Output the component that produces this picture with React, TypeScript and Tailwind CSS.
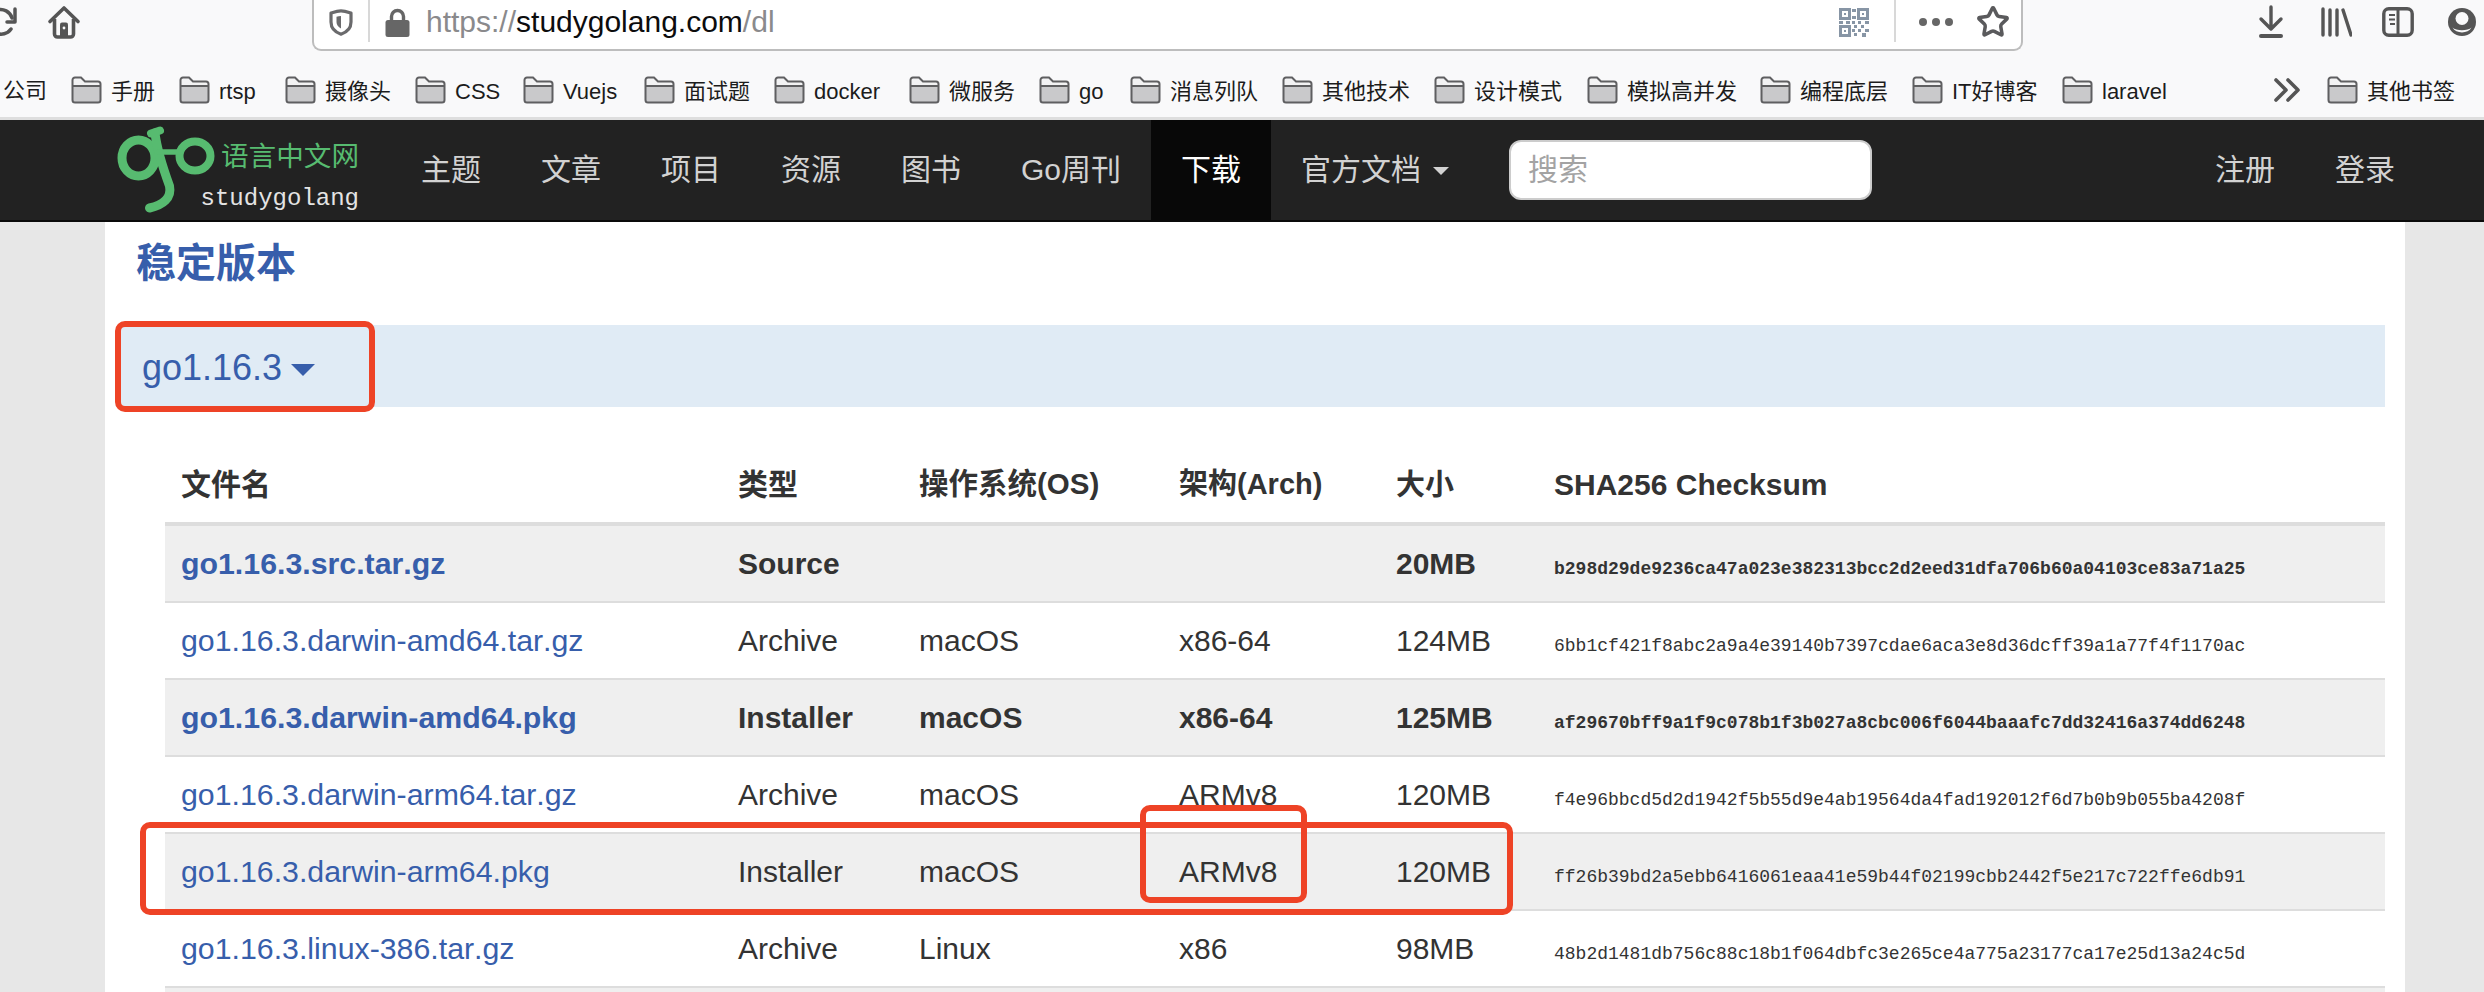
import { Star } from "lucide-react";

const bookmarks = [
  { label: "手册", width: "w-[108px]" },
  { label: "rtsp", width: "w-[106px]" },
  { label: "摄像头", width: "w-[130px]" },
  { label: "CSS", width: "w-[108px]" },
  { label: "Vuejs", width: "w-[121px]" },
  { label: "面试题", width: "w-[130px]" },
  { label: "docker", width: "w-[135px]" },
  { label: "微服务", width: "w-[130px]" },
  { label: "go", width: "w-[91px]" },
  { label: "消息列队", width: "w-[152px]" },
  { label: "其他技术", width: "w-[152px]" },
  { label: "设计模式", width: "w-[153px]" },
  { label: "模拟高并发", width: "w-[173px]" },
  { label: "编程底层", width: "w-[152px]" },
  { label: "IT好博客", width: "w-[150px]" },
  { label: "laravel", width: "w-[212px]" },
];

const navItems = ["主题", "文章", "项目", "资源", "图书", "Go周刊"];

const rows = [
  { file: "go1.16.3.src.tar.gz", kind: "Source", os: "", arch: "", size: "20MB", sha: "b298d29de9236ca47a023e382313bcc2d2eed31dfa706b60a04103ce83a71a25", bold: true },
  { file: "go1.16.3.darwin-amd64.tar.gz", kind: "Archive", os: "macOS", arch: "x86-64", size: "124MB", sha: "6bb1cf421f8abc2a9a4e39140b7397cdae6aca3e8d36dcff39a1a77f4f1170ac", bold: false },
  { file: "go1.16.3.darwin-amd64.pkg", kind: "Installer", os: "macOS", arch: "x86-64", size: "125MB", sha: "af29670bff9a1f9c078b1f3b027a8cbc006f6044baaafc7dd32416a374dd6248", bold: true },
  { file: "go1.16.3.darwin-arm64.tar.gz", kind: "Archive", os: "macOS", arch: "ARMv8", size: "120MB", sha: "f4e96bbcd5d2d1942f5b55d9e4ab19564da4fad192012f6d7b0b9b055ba4208f", bold: false },
  { file: "go1.16.3.darwin-arm64.pkg", kind: "Installer", os: "macOS", arch: "ARMv8", size: "120MB", sha: "ff26b39bd2a5ebb6416061eaa41e59b44f02199cbb2442f5e217c722ffe6db91", bold: false },
  { file: "go1.16.3.linux-386.tar.gz", kind: "Archive", os: "Linux", arch: "x86", size: "98MB", sha: "48b2d1481db756c88c18b1f064dbfc3e265ce4a775a23177ca17e25d13a24c5d", bold: false },
];

function Folder() {
  return (
    <svg width="31" height="28" viewBox="0 0 31 28" className="shrink-0">
      <path d="M1.5 12V4a2.5 2.5 0 0 1 2.5-2.5h6l4 4h13a2.5 2.5 0 0 1 2.5 2.5v4z" fill="#f2f2f3" />
      <path d="M1.5 10h28v14.5a2 2 0 0 1-2 2h-24a2 2 0 0 1-2-2z" fill="#c9c9cb" />
      <path d="M4 1.5h6l4 4h13a2.5 2.5 0 0 1 2.5 2.5v16a2.5 2.5 0 0 1-2.5 2.5H4A2.5 2.5 0 0 1 1.5 24V4A2.5 2.5 0 0 1 4 1.5zM1.5 10h28" fill="none" stroke="#5f5f61" strokeWidth="2" />
    </svg>
  );
}

function Toolbar() {
  return (
    <div className="flex items-start h-[62px]">
      <svg width="20" height="40" viewBox="0 0 20 40" className="shrink-0 mt-0">
        <path d="M-3 10A12 12 0 0 1 12 18M11 29A12 12 0 0 1-4 33" fill="none" stroke="#555" strokeWidth="3.5" strokeLinecap="round" />
        <path d="M15 9V22H7" fill="none" stroke="#555" strokeWidth="3.5" strokeLinecap="round" strokeLinejoin="round" />
      </svg>
      <svg width="34" height="34" viewBox="0 0 34 34" className="shrink-0 ml-[27px] mt-[5px]">
        <path d="M3 16.5 17 3l14 13.5" fill="none" stroke="#555" strokeWidth="3.6" strokeLinecap="round" strokeLinejoin="round" />
        <path d="M7.5 14v15a3 3 0 0 0 3 3h13a3 3 0 0 0 3-3V14" fill="none" stroke="#555" strokeWidth="3.6" />
        <path d="M13 19.5a2 2 0 0 1 2-2h4a2 2 0 0 1 2 2V31h-8z" fill="#555" />
        <circle cx="17" cy="23" r="1.4" fill="#f9f9fa" />
      </svg>
      <div className="flex items-start ml-[231px] w-[1711px] h-[51px] shrink-0 bg-white border-x-2 border-b-2 border-[#bdbdbd] rounded-b-[9px] relative">
        <svg width="24" height="27" viewBox="0 0 24 27" className="shrink-0 ml-[15px] mt-[9px]">
          <path d="M12 1.8C8 1.8 5 3 2 4v9c0 7 5 10.500 10 12.200C17 23.500 22 20 22 13V4c-3-1-6-2.200-10-2.200z" fill="none" stroke="#6a6a6c" strokeWidth="3.2" strokeLinejoin="round" />
          <path d="M12 7c-1.500 0-3 .3-4.500.8V13c0 3 1.700 5 4.500 6.500z" fill="#6a6a6c" />
        </svg>
        <div className="w-[2px] h-[42px] bg-[#d8d8d8] shrink-0 ml-[15px]" />
        <svg width="25" height="29" viewBox="0 0 25 29" className="shrink-0 ml-[15px] mt-[8px]">
          <path d="M6.500 13V8.500a6 6 0 0 1 12 0V13" fill="none" stroke="#666" strokeWidth="3.4" />
          <rect x="0.500" y="12" width="24" height="17" rx="2.500" fill="#666" />
        </svg>
        <div className="ml-[16px] mt-[5px] text-[30px] leading-[34px] text-[#8a8a8c] whitespace-nowrap font-['Liberation_Sans',sans-serif]">
          https://<span className="text-[#0c0c0d]">studygolang.com</span>/dl
        </div>
        <svg width="30" height="29" viewBox="0 0 30 29" className="shrink-0 ml-auto mt-[8px]" fill="#8795a5">
          <path fillRule="evenodd" d="M0 0h12v12H0zM3 3v6h6V3zM18 0h12v12H18zM21 3v6h6V3zM0 17h12v12H0zM3 20v6h6v-6z" />
          <rect x="5" y="5" width="2" height="2" />
          <rect x="23" y="5" width="2" height="2" />
          <rect x="5" y="22" width="2" height="2" />
          <rect x="13" y="1" width="4" height="3" />
          <rect x="13" y="8" width="4" height="3" />
          <rect x="0" y="13" width="4" height="3" />
          <rect x="7" y="13" width="4" height="3" />
          <rect x="13" y="13" width="3" height="3" />
          <rect x="19" y="13" width="3" height="3" />
          <rect x="26" y="13" width="4" height="3" />
          <rect x="15" y="17" width="3" height="3" />
          <rect x="22" y="17" width="3" height="3" />
          <rect x="13" y="21" width="3" height="3" />
          <rect x="19" y="21" width="3" height="3" />
          <rect x="26" y="21" width="4" height="3" />
          <rect x="15" y="25" width="3" height="3" />
          <rect x="23" y="25" width="4" height="4" />
        </svg>
        <div className="w-[2px] h-[42px] bg-[#d8d8d8] shrink-0 ml-[25px]" />
        <div className="flex gap-[5px] ml-[23px] mt-[18px] shrink-0">
          <span className="w-[8px] h-[8px] rounded-full bg-[#666]" />
          <span className="w-[8px] h-[8px] rounded-full bg-[#666]" />
          <span className="w-[8px] h-[8px] rounded-full bg-[#666]" />
        </div>
        <Star size={34} strokeWidth={2.5} color="#5a5a5c" className="shrink-0 ml-[23px] mr-[11px] mt-[5px]" />
      </div>
      <svg width="26" height="33" viewBox="0 0 26 33" className="shrink-0 ml-[235px] mt-[5px]">
        <path d="M13 2v21M3 14l10 10 10-10" fill="none" stroke="#555" strokeWidth="3.4" strokeLinecap="round" strokeLinejoin="round" />
        <rect x="1" y="29" width="24" height="4" rx="2" fill="#555" />
      </svg>
      <svg width="32" height="30" viewBox="0 0 32 30" className="shrink-0 ml-[36px] mt-[7px]">
        <path d="M3 2v26M10 3v25M17 3v25M23 3l8 25" fill="none" stroke="#555" strokeWidth="3.4" strokeLinecap="round" />
      </svg>
      <svg width="32" height="30" viewBox="0 0 32 30" className="shrink-0 ml-[30px] mt-[7px]">
        <rect x="1.800" y="1.800" width="28.400" height="26.400" rx="5" fill="none" stroke="#555" strokeWidth="3.4" />
        <path d="M16 2v26" stroke="#555" strokeWidth="3" />
        <path d="M7 8h6M7 12.500h6M8 17h5" stroke="#555" strokeWidth="2" />
      </svg>
      <svg width="28" height="28" viewBox="0 0 28 28" className="shrink-0 ml-[34px] mt-[8px]">
        <circle cx="14" cy="14" r="14" fill="#555" />
        <circle cx="14" cy="10.500" r="6.500" fill="#f9f9fa" />
        <path d="M4.500 19.500C8 23 20 23 23.500 19.500C20 26 8 26 4.500 19.500z" fill="#f9f9fa" />
      </svg>
    </div>
  );
}

function BookmarksBar() {
  return (
    <div className="flex items-center h-[55px] text-[22px] text-[#1c1c1c] whitespace-nowrap">
      <span className="w-[71px] pl-[3px] shrink-0 pt-[2px]">公司</span>
      {bookmarks.map((b) => (
        <div key={b.label} className={`flex items-center gap-[9px] shrink-0 ${b.width}`}>
          <Folder />
          <span className="pt-[3px]">{b.label}</span>
        </div>
      ))}
      <svg width="26" height="26" viewBox="0 0 26 26" className="shrink-0 mr-[27px]">
        <path d="M2 3l10 10L2 23M14 3l10 10-10 10" fill="none" stroke="#555" strokeWidth="3.6" strokeLinecap="round" strokeLinejoin="round" />
      </svg>
      <div className="flex items-center gap-[9px] shrink-0">
        <Folder />
        <span className="pt-[3px]">其他书签</span>
      </div>
    </div>
  );
}

function Logo() {
  return (
    <div className="flex items-start w-[286px] shrink-0">
      <svg width="117" height="100" viewBox="0 0 117 100" className="shrink-0">
        <g fill="none" stroke="#57bb70" strokeLinecap="round">
          <ellipse cx="33.500" cy="38" rx="16.500" ry="18" strokeWidth="9" />
          <ellipse cx="90" cy="36" rx="15.500" ry="14.500" strokeWidth="8" />
          <path d="M46 13.500 55 10.500" strokeWidth="8" />
          <path d="M50 13C52 30 58 48 64.500 66C67 78 58 85 44.500 88" strokeWidth="9" />
          <path d="M54 32H75" strokeWidth="5.500" />
        </g>
      </svg>
      <div className="flex flex-col items-end w-[158px] -ml-[21px]">
        <span className="text-[27.6px] leading-[30px] mt-[22px] text-[#57bb70] whitespace-nowrap">语言中文网</span>
        <span className="text-[24px] leading-[30px] mt-[12px] text-[#e4e4e4] font-['Liberation_Mono',monospace]">studygolang</span>
      </div>
    </div>
  );
}

function Navbar() {
  return (
    <div className="flex items-center h-[102px] pl-[105px] pr-[59px] bg-[#222222] border-b-2 border-[#0a0a0a] text-[30px] text-[#d2d2d2] whitespace-nowrap">
      <Logo />
      {navItems.map((item) => (
        <a key={item} className="px-[30px] pb-[2px]">{item}</a>
      ))}
      <a className="flex items-center self-stretch px-[30px] pb-[2px] bg-[#080808] text-white">下载</a>
      <a className="flex items-center px-[30px] pb-[2px] gap-[12px]">
        官方文档
        <span className="w-0 h-0 border-x-[8px] border-t-[8px] border-x-transparent border-t-[#d2d2d2] mt-[4px]" />
      </a>
      <input
        placeholder="搜索"
        className="w-[363px] h-[60px] ml-[30px] rounded-[12px] bg-white border-2 border-[#cccccc] pl-[17px] text-[30px] placeholder:text-[#a3a3a3] outline-none"
      />
      <a className="ml-auto px-[30px] pb-[2px]">注册</a>
      <a className="px-[30px] pb-[2px]">登录</a>
    </div>
  );
}

function DownloadTable() {
  return (
    <table className="table-fixed w-[2220px] ml-[60px] mt-[33px] border-separate border-spacing-0 text-[30px] text-[#333333]">
      <colgroup>
        <col className="w-[557px]" />
        <col className="w-[181px]" />
        <col className="w-[260px]" />
        <col className="w-[217px]" />
        <col className="w-[158px]" />
        <col />
      </colgroup>
      <thead>
        <tr className="h-[86px] text-left font-bold">
          <th className="px-[16px] pt-[6px] border-b-4 border-[#dddddd]">文件名</th>
          <th className="px-[16px] pt-[6px] border-b-4 border-[#dddddd]">类型</th>
          <th className="px-[16px] pt-[6px] border-b-4 border-[#dddddd] whitespace-nowrap text-[29.5px]">操作系统(OS)</th>
          <th className="px-[16px] pt-[8px] border-b-4 border-[#dddddd] whitespace-nowrap text-[29px]">架构(Arch)</th>
          <th className="px-[16px] pt-[9px] border-b-4 border-[#dddddd] text-[29px]">大小</th>
          <th className="px-[16px] pt-[6px] border-b-4 border-[#dddddd]">SHA256 Checksum</th>
        </tr>
      </thead>
      <tbody>
        {rows.map((r, i) => (
          <tr key={r.file} className={`h-[77px] ${i % 2 === 0 ? "bg-[#efefef]" : "bg-white"} ${r.bold ? "font-bold" : ""}`}>
            <td className="px-[16px] border-b-2 border-[#dddddd] text-[#375eab] text-[30.3px] [font-kerning:none]">{r.file}</td>
            <td className="px-[16px] border-b-2 border-[#dddddd]">{r.kind}</td>
            <td className="px-[16px] border-b-2 border-[#dddddd]">{r.os}</td>
            <td className="px-[16px] border-b-2 border-[#dddddd]">{r.arch}</td>
            <td className="px-[16px] border-b-2 border-[#dddddd]">{r.size}</td>
            <td className="px-[16px] pt-[12px] border-b-2 border-[#dddddd] text-[18px] font-['Liberation_Mono',monospace] whitespace-nowrap">{r.sha}</td>
          </tr>
        ))}
        <tr className="h-[77px] bg-[#efefef]">
          <td colSpan={6} />
        </tr>
      </tbody>
    </table>
  );
}

export default function App() {
  return (
    <div className="w-[2484px] h-[992px] overflow-hidden relative bg-[#e7e7e7] font-['Liberation_Sans','Noto_Sans_CJK_SC',sans-serif]">
      <div className="h-[120px] bg-[#f9f9fa] border-b-[3px] border-[#dedede]">
        <Toolbar />
        <BookmarksBar />
      </div>
      <Navbar />
      <main className="w-[2300px] ml-[105px] h-[770px] bg-white overflow-hidden">
        <h2 className="pl-[31px] pt-[11px] text-[40px] leading-[60px] font-bold text-[#375eab]">稳定版本</h2>
        <div className="flex items-center ml-[12px] mr-[20px] mt-[32px] h-[82px] bg-[#e0ebf5] pl-[25px] pt-[4px] text-[36px] text-[#375eab]">
          go1.16.3
          <span className="ml-[9px] mt-[3px] w-0 h-0 border-x-[12px] border-t-[12px] border-x-transparent border-t-[#375eab]" />
        </div>
        <DownloadTable />
      </main>
      {/* red annotations drawn over the screenshot */}
      <div className="absolute left-[115px] top-[321px] w-[260px] h-[91px] border-[6px] border-[#ee4326] rounded-[10px]" />
      <div className="absolute left-[140px] top-[822px] w-[1373px] h-[93px] border-[6px] border-[#ee4326] rounded-[10px]" />
      <div className="absolute left-[1140px] top-[805px] w-[167px] h-[98px] border-[6px] border-[#ee4326] rounded-[10px]" />
    </div>
  );
}
